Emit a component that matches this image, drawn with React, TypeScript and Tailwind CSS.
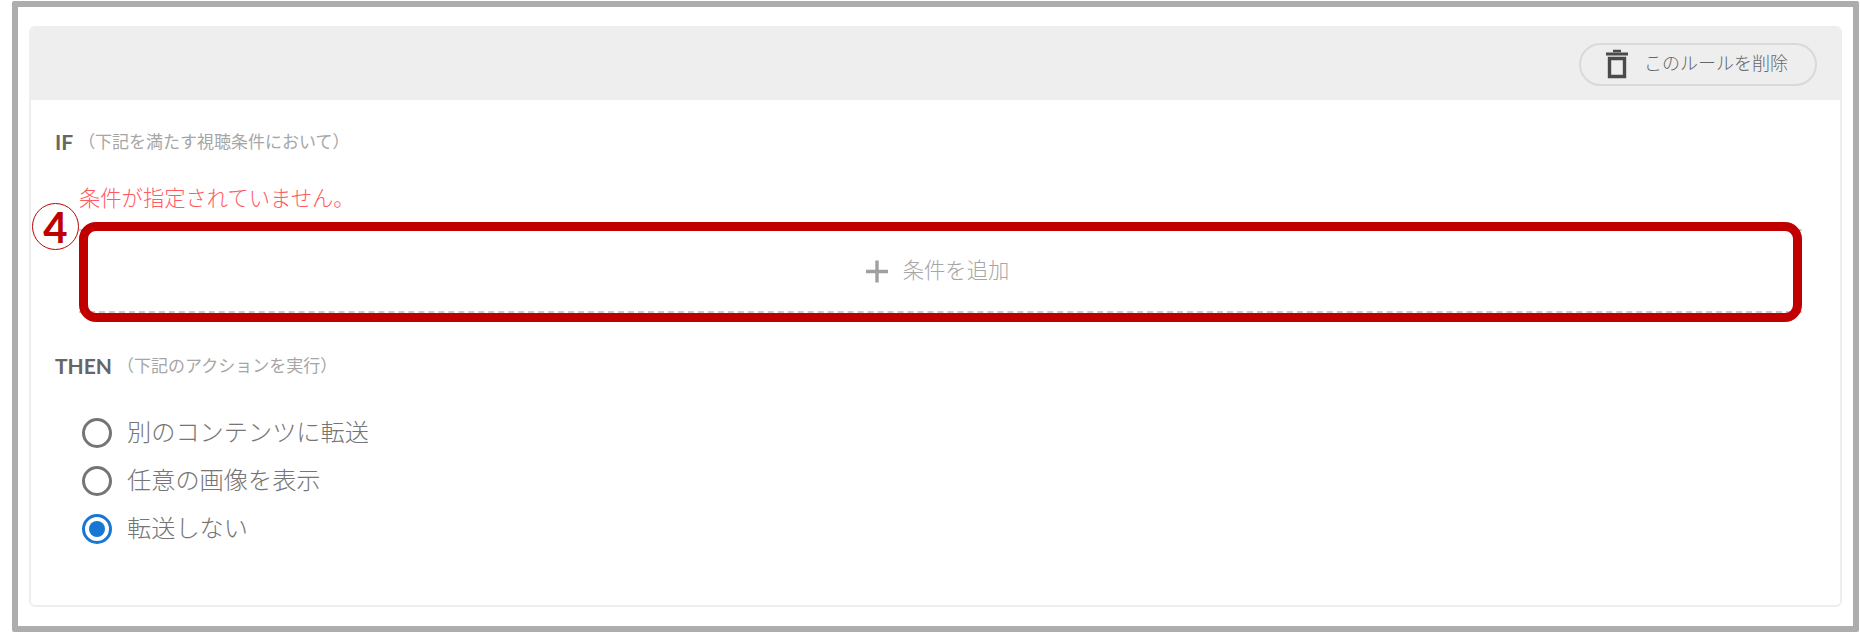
import React from 'react';

const JP = 'font-["Lato","Noto_Sans_CJK_JP",sans-serif]';

function Radio({ label, checked }: { label: string; checked?: boolean }) {
  return (
    <label className="flex h-[48.25px] items-center gap-[15px]">
      <span
        className={`flex h-[30px] w-[30px] items-center justify-center rounded-full border-[3.5px] ${
          checked ? 'border-[#1976d2]' : 'border-[#757575]'
        }`}
      >
        {checked && <span className="h-[16px] w-[16px] rounded-full bg-[#1976d2]" />}
      </span>
      <span className="-mt-[2px] text-[24.2px] leading-none font-light text-[#757575]">{label}</span>
    </label>
  );
}

function SectionTitle({ title, note }: { title: string; note: string }) {
  return (
    <div className="flex items-center">
      <span className="text-[21px] leading-[24px] font-bold text-[#666666]">{title}</span>
      <span className="ml-[5px] text-[17px] leading-[24px] text-[#a6a6a6]">{note}</span>
    </div>
  );
}

export default function App() {
  return (
    <div className={`${JP} bg-white pt-[1px] pl-[12px]`}>
      <div className="h-[631px] w-[1847px] rounded-[2px] border-[6px] border-[#adadad] bg-white px-[11px] pt-[19px]">
        <div className="h-[581px] overflow-hidden rounded-[6px] border-2 border-[#eeeeee]">
          {/* Header */}
          <div className="flex h-[72px] items-start justify-end bg-[#eeeeee] pt-[15px] pr-[23px]">
            <button className="flex h-[43px] w-[238px] items-center rounded-full border-2 border-[#d9d9d9] pl-[24px]">
              <svg width="24" height="30" viewBox="0 0 24 30" fill="none" className="-mt-[1px] text-[#4a4a4a]">
                <path d="M1 5h22" stroke="currentColor" strokeWidth="3" />
                <path d="M8 2h8" stroke="currentColor" strokeWidth="2.5" />
                <path d="M4.5 9.5h15v18h-15z" stroke="currentColor" strokeWidth="3.4" />
              </svg>
              <span className="-mt-[3px] ml-[15px] text-[18px] leading-none font-light text-[#666666]">このルールを削除</span>
            </button>
          </div>

          {/* Body */}
          <div className="pt-[30px] pl-[24px]">
            <SectionTitle title="IF" note="（下記を満たす視聴条件において）" />

            <div className="mt-[29px] ml-[24px] text-[21.3px] leading-[30px] font-light text-[#ff5a5f]">条件が指定されていません。</div>

            <div className="relative mt-[16px] ml-[24px] w-[1723px]">
              <div className="flex h-[84px] items-center justify-center border-y-2 border-dashed border-[#cccccc] bg-white pr-[7px]">
                <svg width="24" height="24" viewBox="0 0 24 24" className="text-[#a0a0a0]">
                  <path d="M1 12.5h22M12 1.5v22" stroke="currentColor" strokeWidth="3.4" />
                </svg>
                <span className="ml-[14px] text-[21.3px] leading-none font-light text-[#a6a6a6]">条件を追加</span>
              </div>

              {/* Annotation overlay */}
              <div className="absolute -top-[7px] -bottom-[9px] inset-x-0 rounded-[17px] border-[9px] border-[#c00000]" />
              <div className="absolute -top-[26px] -left-[47px] flex h-[47px] w-[47px] items-center justify-center rounded-full border border-[#c00000] bg-white text-[42px] leading-none font-bold text-[#c00000]">
                4
              </div>
            </div>

            <div className="mt-[41px]">
              <SectionTitle title="THEN" note="（下記のアクションを実行）" />
            </div>

            <div className="mt-[30.5px] ml-[27px]">
              <Radio label="別のコンテンツに転送" />
              <Radio label="任意の画像を表示" />
              <Radio label="転送しない" checked />
            </div>
          </div>
        </div>
      </div>
    </div>
  );
}
